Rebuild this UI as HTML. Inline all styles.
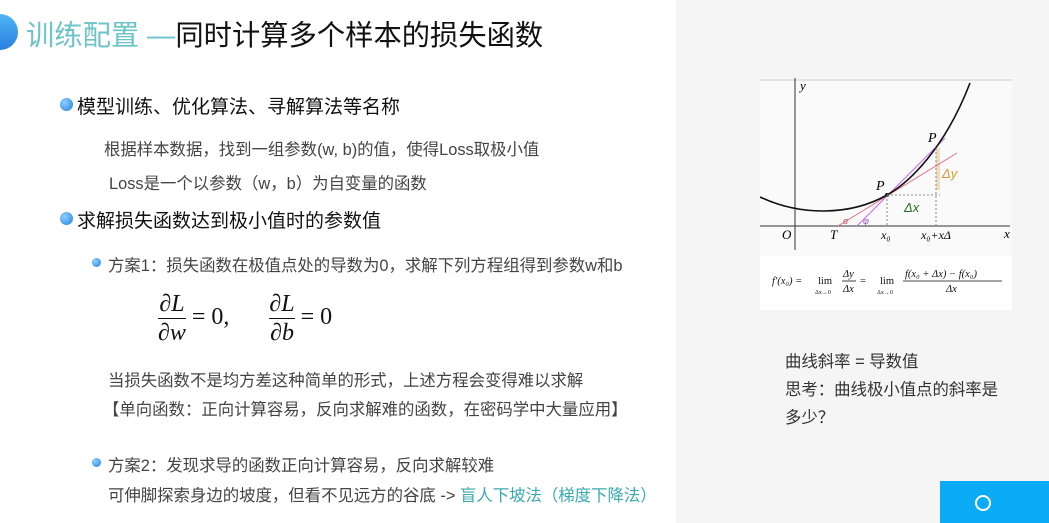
<!DOCTYPE html>
<html><head><meta charset="utf-8"><style>
body{margin:0;width:1049px;height:523px;overflow:hidden;background:#fff;font-family:"Liberation Sans","Noto Sans CJK SC",sans-serif;position:relative}
.a{position:absolute;white-space:nowrap}
.dot{position:absolute;border-radius:50%;background:radial-gradient(circle at 35% 35%,#8fd0ff,#1e7ee0)}
</style></head><body>
<div style="position:absolute;left:676px;top:0;width:373px;height:523px;background:#f5f5f5"></div>
<div style="position:absolute;left:-18px;top:14px;width:36px;height:36px;border-radius:50%;background:linear-gradient(#4fb6f5,#2a7de0)"></div>
<div class="a" style="left:26px;top:13px;font-size:28.3px;color:#6cc4c9">训练配置 —<span style="color:#111">同时计算多个样本的损失函数</span></div>
<div class="dot" style="left:60px;top:98px;width:13px;height:13px"></div>
<div class="a" style="left:77px;top:92px;font-size:19px;color:#111">模型训练、优化算法、寻解算法等名称</div>
<div class="a" style="left:104px;top:136px;font-size:16.4px;color:#444">根据样本数据，找到一组参数(w, b)的值，使得Loss取极小值</div>
<div class="a" style="left:109px;top:170px;font-size:16.4px;color:#444">Loss是一个以参数（w，b）为自变量的函数</div>
<div class="dot" style="left:60px;top:212px;width:13px;height:13px"></div>
<div class="a" style="left:77px;top:206px;font-size:19px;color:#111">求解损失函数达到极小值时的参数值</div>
<div class="dot" style="left:92px;top:258px;width:9px;height:9px"></div>
<div class="a" style="left:108px;top:252px;font-size:16.4px;color:#444">方案1：损失函数在极值点处的导数为0，求解下列方程组得到参数w和b</div>
<div class="a" style="left:158px;top:292px;font-family:'Liberation Serif',serif;font-size:24px;color:#111;line-height:1">
<span style="display:inline-block;text-align:center;vertical-align:middle"><i>∂L</i><div style="border-top:1.5px solid #111;margin:2px 0"></div><i>∂w</i></span> = 0,<span style="display:inline-block;width:40px"></span><span style="display:inline-block;text-align:center;vertical-align:middle"><i>∂L</i><div style="border-top:1.5px solid #111;margin:2px 0"></div><i>∂b</i></span> = 0</div>
<div class="a" style="left:108px;top:367px;font-size:16.4px;color:#444">当损失函数不是均方差这种简单的形式，上述方程会变得难以求解</div>
<div class="a" style="left:103px;top:396px;font-size:16.4px;color:#444">【单向函数：正向计算容易，反向求解难的函数，在密码学中大量应用】</div>
<div class="dot" style="left:92px;top:458px;width:9px;height:9px"></div>
<div class="a" style="left:108px;top:452px;font-size:16.4px;color:#444">方案2：发现求导的函数正向计算容易，反向求解较难</div>
<div class="a" style="left:108px;top:482px;font-size:16.4px;color:#444">可伸脚探索身边的坡度，但看不见远方的谷底 -&gt; <span style="color:#3aaab0">盲人下坡法（梯度下降法）</span></div>
<svg class="a" style="left:760px;top:78px" width="252" height="232" viewBox="0 0 252 232">
<rect width="252" height="232" fill="#fafafa"/>
<line x1="0" y1="2" x2="252" y2="2" stroke="#ccc"/>
<line x1="35" y1="0" x2="35" y2="172" stroke="#333"/>
<line x1="0" y1="148" x2="250" y2="148" stroke="#333"/>
<text x="40" y="12" font-family="Liberation Serif" font-style="italic" font-size="13">y</text>
<text x="244" y="160" font-family="Liberation Serif" font-style="italic" font-size="13">x</text>
<rect x="176" y="70" width="4" height="42" fill="#f0dcc0"/>
<line x1="78" y1="148" x2="197" y2="75" stroke="#e07080"/>
<line x1="97" y1="148" x2="185" y2="60" stroke="#c070e0"/>
<path d="M0 119 C40 138 90 138 127 117 C150 104 185 70 210 5" fill="none" stroke="#111" stroke-width="1.6"/>
<circle cx="127" cy="117" r="2" fill="#111"/>
<line x1="127" y1="117" x2="127" y2="148" stroke="#888" stroke-dasharray="2 2"/>
<line x1="176" y1="70" x2="176" y2="148" stroke="#888" stroke-dasharray="2 2"/>
<line x1="127" y1="117" x2="180" y2="117" stroke="#888" stroke-dasharray="2 2"/>
<text x="144" y="134" fill="#2a6a2a" font-size="13" font-style="italic">Δx</text>
<text x="182" y="100" fill="#d89a30" font-size="13" font-style="italic">Δy</text>
<text x="168" y="64" font-family="Liberation Serif" font-style="italic" font-size="14">P</text>
<text x="116" y="112" font-family="Liberation Serif" font-style="italic" font-size="14">P</text>
<text x="83" y="146" fill="#c05060" font-size="9" font-style="italic">α</text>
<text x="103" y="146" fill="#a050c0" font-size="9" font-style="italic">φ</text>
<text x="22" y="161" font-family="Liberation Serif" font-style="italic" font-size="13">O</text>
<text x="70" y="161" font-family="Liberation Serif" font-style="italic" font-size="13">T</text>
<text x="121" y="161" font-family="Liberation Serif" font-style="italic" font-size="12">x₀</text>
<text x="161" y="161" font-family="Liberation Serif" font-style="italic" font-size="12">x₀+xΔ</text>
<rect x="0" y="178" width="252" height="54" fill="#fff"/>
<g font-family="Liberation Serif" font-size="10.5" fill="#111">
<text x="12" y="206" font-style="italic">f′(x₀) =</text>
<text x="58" y="206">lim</text>
<text x="55" y="216" font-size="6">Δx→0</text>
<text x="83" y="199" font-style="italic">Δy</text>
<line x1="82" y1="203" x2="96" y2="203" stroke="#111" stroke-width=".8"/>
<text x="83" y="214" font-style="italic">Δx</text>
<text x="100" y="206">=</text>
<text x="120" y="206">lim</text>
<text x="117" y="216" font-size="6">Δx→0</text>
<text x="145" y="199" font-style="italic">f(x₀ + Δx) − f(x₀)</text>
<line x1="143" y1="203" x2="242" y2="203" stroke="#111" stroke-width=".8"/>
<text x="186" y="214" font-style="italic">Δx</text>
</g>
</svg>
<div class="a" style="left:785px;top:348px;font-size:16.4px;color:#333;line-height:28px">曲线斜率 = 导数值<br>思考：曲线极小值点的斜率是<br>多少？</div>
<div style="position:absolute;left:940px;top:481px;width:109px;height:42px;background:#0aaaf5"></div>
<div style="position:absolute;left:975px;top:495px;width:12px;height:12px;border:2px solid #fff;border-radius:50%"></div>
</body></html>
